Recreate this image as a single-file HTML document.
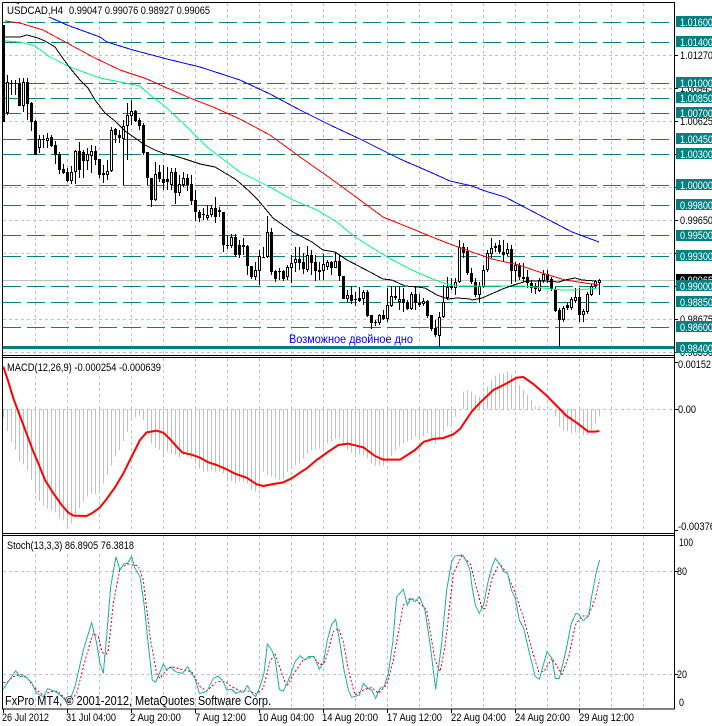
<!DOCTYPE html>
<html><head><meta charset="utf-8"><title>USDCAD H4</title>
<style>html,body{margin:0;padding:0;background:#fff}svg{display:block}text{font-family:"Liberation Sans",sans-serif;font-size:11px;fill:#000}</style></head>
<body>
<svg width="712" height="726" viewBox="0 0 712 726" xmlns="http://www.w3.org/2000/svg">
<rect width="712" height="726" fill="#fff"/>
<!-- grid -->
<g stroke="#c0c0c0" stroke-width="1" stroke-dasharray="3 3" shape-rendering="crispEdges" fill="none">
<path d="M3 55.5H674M3 88.5H674M3 121.5H674M3 187.5H674M3 220.5H674M3 253.5H674M3 319.5H674M3 352.5H674"/>
<path d="M3 409.5H674M3 571.5H674M3 674.5H674"/>
<path d="M35.5 3V354M67.5 3V354M99.5 3V354M131.5 3V354M163.5 3V354M195.5 3V354M227.5 3V354M259.5 3V354M291.5 3V354M323.5 3V354M355.5 3V354M387.5 3V354M419.5 3V354M451.5 3V354M483.5 3V354M515.5 3V354M547.5 3V354M579.5 3V354M611.5 3V354M643.5 3V354"/>
<path d="M35.5 358V532M67.5 358V532M99.5 358V532M131.5 358V532M163.5 358V532M195.5 358V532M227.5 358V532M259.5 358V532M291.5 358V532M323.5 358V532M355.5 358V532M387.5 358V532M419.5 358V532M451.5 358V532M483.5 358V532M515.5 358V532M547.5 358V532M579.5 358V532M611.5 358V532M643.5 358V532"/>
<path d="M35.5 536V708M67.5 536V708M99.5 536V708M131.5 536V708M163.5 536V708M195.5 536V708M227.5 536V708M259.5 536V708M291.5 536V708M323.5 536V708M355.5 536V708M387.5 536V708M419.5 536V708M451.5 536V708M483.5 536V708M515.5 536V708M547.5 536V708M579.5 536V708M611.5 536V708M643.5 536V708"/>
</g>
<path d="M3 280.5H674" stroke="#c0c0c0" shape-rendering="crispEdges"/>
<!-- teal levels -->
<g stroke="#008080" stroke-width="1" stroke-dasharray="18 6" shape-rendering="crispEdges" fill="none">
<path d="M3 22.5H674M3 42.5H674M3 83.5H674M3 98.5H674M3 113.5H674M3 139.5H674M3 154.5H674M3 185.5H674M3 205.5H674M3 235.5H674M3 256.5H674M3 286.5H674M3 302.5H674M3 327.5H674"/>
</g>
<rect x="3" y="346" width="671" height="3" fill="#008080"/>
<!-- wicks -->
<path shape-rendering="crispEdges" stroke="#000" fill="none" d="M3.5 25V122M7.5 75V115M11.5 80V95M15.5 80V95M19.5 78V106M23.5 78V112M27.5 78V120M31.5 102V131M35.5 120V155M39.5 135V153M43.5 135V148M47.5 133V148M51.5 135V147M55.5 141V164M59.5 152V174M63.5 164V174M67.5 168V182M71.5 166V184M75.5 150V184M79.5 142V178M83.5 150V178M87.5 148V170M91.5 145V173M95.5 146V165M99.5 159V178M103.5 165V183M107.5 160V180M111.5 127V172M115.5 128V143M119.5 130V143M123.5 120V185M127.5 103V160M131.5 100V125M135.5 110V122M139.5 118V130M143.5 123V155M147.5 152V185M151.5 178V207M155.5 162V201M159.5 165V182M163.5 165V190M167.5 167V190M171.5 168V190M175.5 168V204M179.5 175V196M183.5 172V187M187.5 174V191M191.5 175V205M195.5 190V221M199.5 210V222M203.5 208V220M207.5 205V220M211.5 205V217M215.5 197V223M219.5 207V217M223.5 212V252M227.5 235V249M231.5 234V248M235.5 234V257M239.5 240V258M243.5 238V255M247.5 245V275M251.5 266V279M255.5 262V280M259.5 250V285M263.5 247V258M267.5 216V258M271.5 228V275M275.5 270V282M279.5 268V280M283.5 270V281M287.5 265V280M291.5 255V283M295.5 247V272M299.5 247V270M303.5 253V274M307.5 246V272M311.5 250V275M315.5 255V281M319.5 262V280M323.5 254V280M327.5 260V270M331.5 261V275M335.5 252V268M339.5 255V281M343.5 276V299M347.5 290V302M351.5 286V304M355.5 292V306M359.5 287V302M363.5 290V305M367.5 290V317M371.5 315V329M375.5 320V326M379.5 314V325M383.5 310V320M387.5 288V322M391.5 286V307M395.5 286V300M399.5 286V310M403.5 288V312M407.5 300V310M411.5 292V310M415.5 286V310M419.5 294V307M423.5 298V306M427.5 300V318M431.5 315V331M435.5 320V337M439.5 312V347M443.5 285V318M447.5 277V300M451.5 278V290M455.5 278V295M459.5 240V283M463.5 243V258M467.5 247V275M471.5 268V284M475.5 278V297M479.5 282V303M483.5 265V288M487.5 250V272M491.5 238V258M495.5 243V252M499.5 240V254M503.5 240V262M507.5 243V256M511.5 245V284M515.5 262V282M519.5 263V280M523.5 263V282M527.5 270V288M531.5 280V293M535.5 283V294M539.5 278V292M543.5 270V283M547.5 270V283M551.5 277V291M555.5 287V312M559.5 308V347M563.5 306V322M567.5 303V310M571.5 297V310M575.5 288V303M579.5 288V322M583.5 309V322M587.5 292V314M591.5 284V296M595.5 280V288M599.5 279V295"/>
<!-- bodies -->
<path shape-rendering="crispEdges" stroke="#000" stroke-width="3" fill="none" d="M3.5 25V122M7.5 82V113M11.5 83V84M15.5 83V84M19.5 83V106M23.5 82V106M27.5 82V104M31.5 103V122M35.5 121V155M39.5 139V148M43.5 139V140M47.5 138V141M51.5 137V146M55.5 145V155M59.5 154V170M63.5 169V173M67.5 172V181M71.5 172V181M75.5 151V172M79.5 151V170M83.5 152V161M87.5 154V161M91.5 151V156M95.5 151V160M99.5 159V175M103.5 173V175M107.5 171V175M111.5 130V171M115.5 129V135M119.5 135V138M123.5 126V139M127.5 115V126M131.5 111V116M135.5 111V121M139.5 120V126M143.5 125V153M147.5 152V178M151.5 178V200M155.5 174V200M159.5 172V179M163.5 179V183M167.5 179V182M171.5 172V185M175.5 172V193M179.5 184V193M183.5 178V185M187.5 178V185M191.5 184V201M195.5 200V212M199.5 212V218M203.5 214V215M207.5 215V218M211.5 208V215M215.5 208V217M219.5 210V212M223.5 212V245M227.5 245V246M231.5 237V246M235.5 237V255M239.5 245V255M243.5 245V247M247.5 246V266M251.5 266V277M255.5 270V277M259.5 256V271M263.5 257V258M267.5 232V257M271.5 232V272M275.5 271V279M279.5 271V272M283.5 271V279M287.5 267V277M291.5 263V268M295.5 259V263M299.5 259V263M303.5 262V269M307.5 255V270M311.5 255V263M315.5 262V271M319.5 270V272M323.5 264V271M327.5 262V267M331.5 262V268M335.5 261V268M339.5 261V276M343.5 276V299M347.5 295V299M351.5 295V301M355.5 299V300M359.5 298V301M363.5 292V299M367.5 292V316M371.5 315V323M375.5 322V323M379.5 315V323M383.5 315V319M387.5 305V319M391.5 296V306M395.5 296V298M399.5 299V302M403.5 299V303M407.5 302V309M411.5 294V309M415.5 294V303M419.5 303V305M423.5 301V304M427.5 301V316M431.5 315V329M435.5 328V335M439.5 317V336M443.5 302V317M447.5 287V298M451.5 286V288M455.5 282V288M459.5 247V282M463.5 247V253M467.5 251V273M471.5 273V282M475.5 282V295M479.5 286V295M483.5 270V287M487.5 253V270M491.5 248V254M495.5 246V248M499.5 245V252M503.5 252V255M507.5 249V254M511.5 249V271M515.5 265V271M519.5 265V277M523.5 277V279M527.5 277V283M531.5 283V288M535.5 286V289M539.5 280V291M543.5 274V281M547.5 274V280M551.5 279V289M555.5 289V311M559.5 310V320M563.5 308V320M567.5 305V308M571.5 299V308M575.5 297V301M579.5 297V315M583.5 311V315M587.5 294V312M591.5 286V295M595.5 281V286M599.5 280V283"/>
<path shape-rendering="crispEdges" stroke="#fff" stroke-width="1" fill="none" d="M7.5 83V112M23.5 83V105M39.5 140V147M47.5 139V140M71.5 173V180M75.5 152V171M87.5 155V160M91.5 152V155M107.5 172V174M111.5 131V170M123.5 127V138M127.5 116V125M131.5 112V115M155.5 175V199M171.5 173V184M179.5 185V192M183.5 179V184M207.5 216V217M211.5 209V214M219.5 211V211M231.5 238V245M255.5 271V276M259.5 257V270M267.5 233V256M287.5 268V276M291.5 264V267M295.5 260V262M307.5 256V269M323.5 265V270M327.5 263V266M335.5 262V267M347.5 296V298M363.5 293V298M379.5 316V322M387.5 306V318M391.5 297V305M399.5 300V301M411.5 295V308M423.5 302V303M439.5 318V335M443.5 303V316M447.5 288V297M455.5 283V287M459.5 248V281M479.5 287V294M483.5 271V286M487.5 254V269M491.5 249V253M507.5 250V253M515.5 266V270M539.5 281V290M543.5 275V280M563.5 309V319M571.5 300V307M575.5 298V300M583.5 312V314M587.5 295V311M591.5 287V294M595.5 282V285M599.5 281V282"/>
<!-- moving averages -->
<g fill="none" stroke-width="1" shape-rendering="crispEdges">
<polyline stroke="#0000ff" points="15,2 47,16 67,25 100,37 107,42 133,50 167,59 200,67 240,80 270,94 300,110 330,125 360,139 400,159 430,172 450,181 472,186 485,191 505,197 549,220 572,232 599,242"/>
<polyline stroke="#ff0000" points="5,21 20,23 43,30 67,43 93,57 120,70 147,79 167,88 190,98 213,107 240,119 270,135 300,157 330,178 360,200 383,217 420,232 447,243 472,252 492,259 519,265 542,273 565,280 585,283 599,285"/>
<polyline stroke="#00ff7f" points="5,41 20,42 35,46 50,57 70,67 100,78 125,83 140,86 150,95 167,108 187,127 207,147 240,172 270,187 293,200 317,210 337,222 355,237 387,257 410,269 430,278 443,283 457,286 470,286 502,286 525,286 552,289 562,290 575,290 589,289 599,288"/>
<polyline stroke="#000" points="5,37 20,37 27,35 38,38 45,41 50,44 55,47 62,57 70,68 80,80 88,88 95,100 105,113 115,121 125,131 135,138 145,145 155,150 165,154 172,155 185,159 200,164 215,167 225,173 235,179 240,183 250,192 258,200 273,218 293,232 312,242 323,250 335,252 347,260 370,272 383,279 392,280 405,286 417,287 425,288 437,295 448,299 457,298 470,299 472,300 482,298 505,288 517,284 527,281 545,281 559,282 565,280 575,278 582,280 595,281"/>
</g>
<!-- MACD histogram -->
<g transform="translate(0,355) scale(.333333)">
<path shape-rendering="crispEdges" stroke="#c0c0c0" stroke-width="3" fill="none" d="M10.5 162V188M22.5 162V228M34.5 162V260M46.5 162V285M58.5 162V318M70.5 162V328M82.5 162V345M94.5 162V375M106.5 162V405M118.5 162V438M130.5 162V452M142.5 162V460M154.5 162V465M166.5 162V473M178.5 162V490M190.5 162V497M202.5 162V515M214.5 162V505M226.5 162V480M238.5 162V460M250.5 162V440M262.5 162V425M274.5 162V415M286.5 162V418M298.5 162V405M310.5 162V385M322.5 162V360M334.5 162V332M346.5 162V305M358.5 162V285M370.5 162V258M382.5 162V230M394.5 162V190M406.5 162V188M418.5 162V182M430.5 162V195M442.5 162V225M454.5 162V265M466.5 162V277M478.5 162V285M490.5 162V300M502.5 162V290M514.5 162V295M526.5 162V300M538.5 162V308M550.5 162V300M562.5 162V305M574.5 162V310M586.5 162V320M598.5 162V340M610.5 162V350M622.5 162V350M634.5 162V345M646.5 162V350M658.5 162V350M670.5 162V355M682.5 162V370M694.5 162V378M706.5 162V385M718.5 162V380M730.5 162V380M742.5 162V385M754.5 162V405M766.5 162V410M778.5 162V400M790.5 162V350M802.5 162V360M814.5 162V365M826.5 162V370M838.5 162V375M850.5 162V370M862.5 162V350M874.5 162V340M886.5 162V330M898.5 162V325"/>
<path transform="translate(900,0)" shape-rendering="crispEdges" stroke="#c0c0c0" stroke-width="3" fill="none" d="M10.5 162V310M22.5 162V295M34.5 162V285M46.5 162V283M58.5 162V280M70.5 162V278M82.5 162V265M94.5 162V260M106.5 162V250M118.5 162V250M130.5 162V268M142.5 162V285M154.5 162V292M166.5 162V300M178.5 162V298M190.5 162V300M202.5 162V310M214.5 162V325M226.5 162V332M238.5 162V332M250.5 162V332M262.5 162V310M274.5 162V303M286.5 162V285M298.5 162V275M310.5 162V265M322.5 162V260M334.5 162V255M346.5 162V245M358.5 162V255M370.5 162V245M382.5 162V235M394.5 162V250M406.5 162V265M418.5 162V250M430.5 162V230M442.5 162V215M454.5 162V205M466.5 162V185M490.5 162V110M502.5 162V105M514.5 162V110M526.5 162V120M538.5 162V125M550.5 162V120M562.5 162V95M574.5 162V75M586.5 162V62M598.5 162V55M610.5 162V55M622.5 162V50M634.5 162V60M646.5 162V65M658.5 162V90M670.5 162V105M682.5 162V120M694.5 162V135M706.5 162V155M718.5 162V155M730.5 162V160M766.5 162V185M778.5 162V215M790.5 162V228M802.5 162V230M814.5 162V235M826.5 162V232M838.5 162V235M850.5 162V240M862.5 162V240M874.5 162V225M886.5 162V205M898.5 162V185"/>
<polyline fill="none" stroke="#ff0000" stroke-width="6" stroke-linejoin="round" points="10,35 25,80 40,130 55,170 70,210 85,250 100,290 115,325 135,375 160,415 185,450 205,473 220,482 260,483 280,472 300,457 320,432 345,397 370,355 385,325 405,285 420,255 440,232 470,227 490,233 510,252 530,275 548,293 575,299 600,308 625,322 650,330 680,343 705,356 740,368 770,388 790,393 820,387 850,382 875,370 900,353 920,340 950,315 985,290 1015,270 1045,266 1090,277 1125,303 1150,314 1200,314 1245,285 1272,260 1300,252 1330,249 1360,238 1380,222 1415,170 1440,143 1480,105 1520,85 1550,68 1570,66 1600,87 1640,122 1700,183 1730,203 1765,230 1785,230 1798,228"/>
</g>
<!-- Stochastic -->
<g transform="translate(0,530) scale(.333333)" fill="none" stroke-width="3" shape-rendering="crispEdges">
<polyline stroke="#ff0000" stroke-dasharray="6 6" points="10,458 20,458 40,440 62,433 82,445 110,480 130,497 150,485 175,485 190,500 205,520 230,490 250,410 270,340 280,310 295,320 305,360 315,380 325,360 340,220 360,115 385,102 415,108 430,150 450,320 470,430 480,445 495,425 515,410 550,420 575,425 600,470 620,483 650,455 675,455 695,470 720,483 745,483 770,492 790,475 810,395 825,370 835,400 860,470 885,425 910,390 940,380 960,405 975,395 1000,305 1015,295 1030,335 1045,420 1065,495 1090,480 1115,472 1135,490 1160,465 1180,390 1210,225 1230,205 1250,210 1280,240 1305,390 1320,425 1335,350 1360,130 1385,78 1410,100 1416,120 1431,180 1446,235 1456,235 1476,145 1498,100 1521,130 1546,190 1571,265 1596,360 1616,425 1631,425 1656,385 1686,433 1706,380 1726,285 1746,258 1766,258 1786,205 1799,148"/>
<polyline stroke="#20b2aa" points="10,477 25,455 47,422 60,440 75,438 95,458 110,490 130,500 143,476 165,484 180,495 200,515 210,510 225,470 250,360 275,278 290,340 300,400 310,430 320,320 332,170 348,80 360,120 372,102 382,100 395,80 405,115 420,140 432,220 445,345 457,450 467,457 490,402 500,420 512,410 525,425 548,430 562,410 585,445 598,490 620,485 640,445 655,438 670,455 680,480 695,478 708,490 720,485 730,487 742,467 755,488 767,500 780,470 792,430 802,342 815,360 825,385 838,478 850,483 870,440 885,395 900,377 915,390 925,380 942,380 958,417 970,400 982,330 995,283 1007,268 1020,340 1032,420 1045,480 1055,502 1078,495 1090,460 1105,475 1115,480 1127,505 1140,475 1152,470 1165,430 1178,340 1190,200 1210,178 1222,225 1232,205 1245,215 1258,200 1275,240 1290,340 1307,478 1325,340 1340,180 1355,95 1365,78 1388,75 1400,95 1410,120 1416,170 1426,225 1438,250 1451,225 1463,160 1476,110 1486,85 1498,100 1511,125 1523,130 1534,180 1546,205 1558,270 1571,295 1586,360 1606,440 1618,448 1641,365 1656,385 1666,445 1678,445 1696,370 1714,280 1728,250 1736,252 1749,272 1766,258 1774,205 1788,130 1799,90"/>
</g>
<!-- title backgrounds -->
<rect x="19" y="3" width="193" height="14" fill="#fff"/>
<rect x="7" y="358" width="155" height="15" fill="#fff"/>
<rect x="7" y="536" width="128" height="15" fill="#fff"/>
<!-- frames -->
<g fill="none" stroke="#000" shape-rendering="crispEdges">
<path d="M2.5 2.5H674.5V709M2.5 2.5V709H674.5"/>
<path d="M2 355.5H675M2 357.5H675M2 533.5H675M2 535.5H675"/>
<path d="M674 55.5H678M674 88.5H678M674 121.5H678M674 154.5H678M674 187.5H678M674 220.5H678M674 253.5H678M674 286.5H678M674 319.5H678M674 352.5H678M674 409.5H678M674 362.5H678M674 530.5H678M674 571.5H678M674 674.5H678"/>
<path d="M3.5 709V713M67.5 709V713M131.5 709V713M195.5 709V713M259.5 709V713M323.5 709V713M387.5 709V713M451.5 709V713M515.5 709V713M579.5 709V713"/>
</g>
<!-- axis grey-level labels -->
<text x="680" y="59" textLength="33" lengthAdjust="spacingAndGlyphs">1.01270</text>
<text x="680" y="92" textLength="33" lengthAdjust="spacingAndGlyphs">1.00945</text>
<text x="680" y="125" textLength="33" lengthAdjust="spacingAndGlyphs">1.00625</text>
<text x="680" y="224" textLength="33" lengthAdjust="spacingAndGlyphs">0.99650</text>
<text x="680" y="323" textLength="33" lengthAdjust="spacingAndGlyphs">0.98675</text>
<text x="680" y="356" textLength="33" lengthAdjust="spacingAndGlyphs">0.98350</text>
<!-- teal tags -->
<g fill="#008080">
<rect x="676" y="16" width="36" height="11"/><rect x="676" y="36" width="36" height="11"/><rect x="676" y="77" width="36" height="11"/><rect x="676" y="92" width="36" height="11"/><rect x="676" y="107" width="36" height="11"/><rect x="676" y="133" width="36" height="11"/><rect x="676" y="148" width="36" height="11"/><rect x="676" y="179" width="36" height="11"/><rect x="676" y="199" width="36" height="11"/><rect x="676" y="230" width="36" height="11"/><rect x="676" y="250" width="36" height="11"/>
</g>
<rect x="676" y="274" width="36" height="11" fill="#000"/>
<text x="680" y="284" textLength="33" lengthAdjust="spacingAndGlyphs" style="fill:#fff">0.99065</text>
<g fill="#008080"><rect x="676" y="280" width="36" height="11"/><rect x="676" y="296" width="36" height="11"/><rect x="676" y="321" width="36" height="11"/><rect x="676" y="342" width="36" height="11"/></g>
<g>
<text x="680" y="26" textLength="33" lengthAdjust="spacingAndGlyphs" style="fill:#fff">1.01600</text><text x="680" y="46" textLength="33" lengthAdjust="spacingAndGlyphs" style="fill:#fff">1.01400</text><text x="680" y="87" textLength="33" lengthAdjust="spacingAndGlyphs" style="fill:#fff">1.01000</text><text x="680" y="102" textLength="33" lengthAdjust="spacingAndGlyphs" style="fill:#fff">1.00850</text><text x="680" y="117" textLength="33" lengthAdjust="spacingAndGlyphs" style="fill:#fff">1.00700</text><text x="680" y="143" textLength="33" lengthAdjust="spacingAndGlyphs" style="fill:#fff">1.00450</text><text x="680" y="158" textLength="33" lengthAdjust="spacingAndGlyphs" style="fill:#fff">1.00300</text><text x="680" y="189" textLength="33" lengthAdjust="spacingAndGlyphs" style="fill:#fff">1.00000</text><text x="680" y="209" textLength="33" lengthAdjust="spacingAndGlyphs" style="fill:#fff">0.99800</text><text x="680" y="239" textLength="33" lengthAdjust="spacingAndGlyphs" style="fill:#fff">0.99500</text><text x="680" y="260" textLength="33" lengthAdjust="spacingAndGlyphs" style="fill:#fff">0.99300</text><text x="680" y="290" textLength="33" lengthAdjust="spacingAndGlyphs" style="fill:#fff">0.99000</text><text x="680" y="306" textLength="33" lengthAdjust="spacingAndGlyphs" style="fill:#fff">0.98850</text><text x="680" y="331" textLength="33" lengthAdjust="spacingAndGlyphs" style="fill:#fff">0.98600</text><text x="680" y="352" textLength="33" lengthAdjust="spacingAndGlyphs" style="fill:#fff">0.98400</text>
</g>
<!-- indicator axis -->
<text x="678" y="368" textLength="33" lengthAdjust="spacingAndGlyphs">0.00152</text>
<text x="678" y="413" textLength="18" lengthAdjust="spacingAndGlyphs">0.00</text>
<text x="678" y="530" textLength="37" lengthAdjust="spacingAndGlyphs">-0.00376</text>
<text x="679" y="546" textLength="14" lengthAdjust="spacingAndGlyphs">100</text>
<text x="677" y="575" textLength="10" lengthAdjust="spacingAndGlyphs">80</text>
<text x="677" y="678" textLength="10" lengthAdjust="spacingAndGlyphs">20</text>
<text x="679" y="706" textLength="5" lengthAdjust="spacingAndGlyphs">0</text>
<!-- titles -->
<text x="7" y="14" textLength="56" lengthAdjust="spacingAndGlyphs">USDCAD,H4</text>
<text x="69" y="14" textLength="141" lengthAdjust="spacingAndGlyphs">0.99047 0.99076 0.98927 0.99065</text>
<text x="7" y="371" textLength="154" lengthAdjust="spacingAndGlyphs">MACD(12,26,9) -0.000254 -0.000639</text>
<text x="7" y="549" textLength="127" lengthAdjust="spacingAndGlyphs">Stoch(13,3,3) 86.8905 76.3818</text>
<text x="289" y="343" textLength="124" lengthAdjust="spacingAndGlyphs" style="fill:#0000ff;font-size:12px">Возможное двойное дно</text>
<text x="5" y="705" textLength="266" lengthAdjust="spacingAndGlyphs" style="font-size:13px">FxPro MT4, © 2001-2012, MetaQuotes Software Corp.</text>
<!-- dates -->
<text x="2" y="721" textLength="47" lengthAdjust="spacingAndGlyphs">26 Jul 2012</text>
<text x="66" y="721" textLength="50" lengthAdjust="spacingAndGlyphs">31 Jul 04:00</text>
<text x="130" y="721" textLength="51" lengthAdjust="spacingAndGlyphs">2 Aug 20:00</text>
<text x="195" y="721" textLength="51" lengthAdjust="spacingAndGlyphs">7 Aug 12:00</text>
<text x="258" y="721" textLength="56" lengthAdjust="spacingAndGlyphs">10 Aug 04:00</text>
<text x="322" y="721" textLength="56" lengthAdjust="spacingAndGlyphs">14 Aug 20:00</text>
<text x="387" y="721" textLength="55" lengthAdjust="spacingAndGlyphs">17 Aug 12:00</text>
<text x="451" y="721" textLength="55" lengthAdjust="spacingAndGlyphs">22 Aug 04:00</text>
<text x="515" y="721" textLength="55" lengthAdjust="spacingAndGlyphs">24 Aug 20:00</text>
<text x="579" y="721" textLength="55" lengthAdjust="spacingAndGlyphs">29 Aug 12:00</text>
</svg>
</body></html>
